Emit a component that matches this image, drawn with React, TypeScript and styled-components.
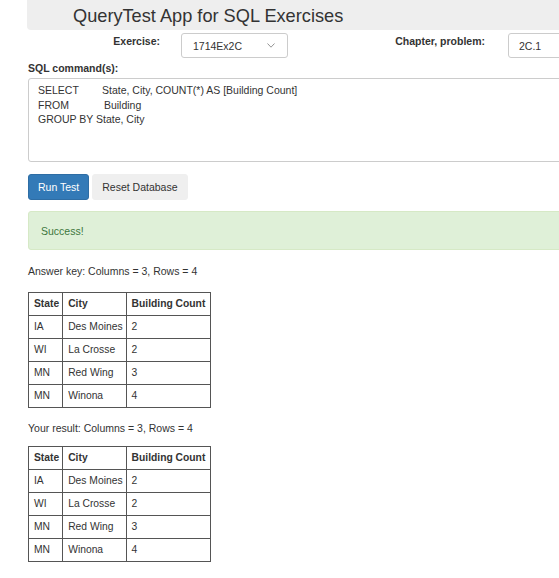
import React from "react";
import styled, { createGlobalStyle } from "styled-components";

const GlobalStyle = createGlobalStyle`
  html, body { margin: 0; padding: 0; background: #fff; overflow: hidden; }
  body {
    font-family: "Liberation Sans", Arial, sans-serif;
    font-size: 10.5px;
    color: #333;
  }
`;

const Page = styled.div`
  width: 700px;
  padding-left: 28px;
  box-sizing: border-box;
`;

const Header = styled.div`
  margin-left: -1px;
  height: 30px;
  background: #eeeeee;
  border-radius: 0 0 4px 4px;
  padding: 5px 0 0 46px;
  box-sizing: border-box;
`;

const Title = styled.h1`
  margin: 0;
  font-weight: normal;
  font-size: 18.2px;
  line-height: 22px;
  color: #333;
`;

const FormRow = styled.div`
  display: flex;
  align-items: flex-start;
  margin-top: 3px;
  height: 26px;
`;

const Label = styled.label<{ $width: number; $gap: number }>`
  width: ${(p) => p.$width}px;
  margin-right: ${(p) => p.$gap}px;
  text-align: right;
  font-weight: bold;
  line-height: 14px;
  padding-top: 1px;
`;

const SelectBox = styled.div`
  width: 107px;
  height: 25px;
  box-sizing: border-box;
  border: 1px solid #ccc;
  border-radius: 3px;
  display: flex;
  align-items: center;
  justify-content: space-between;
  padding: 1px 12px 0 11px;
`;

const Chevron = styled.svg`
  width: 8px;
  height: 5px;
  margin-top: -1px;
`;

const InputBox = styled.div`
  width: 120px;
  height: 25px;
  box-sizing: border-box;
  border: 1px solid #ccc;
  border-radius: 3px;
  display: flex;
  align-items: center;
  padding: 1px 0 0 10px;
`;

const SqlLabel = styled.div`
  font-weight: bold;
  line-height: 14px;
  margin-top: 2px;
`;

const SqlArea = styled.textarea`
  display: block;
  width: 100%;
  height: 84px;
  margin-top: 3px;
  box-sizing: border-box;
  border: 1px solid #ccc;
  border-radius: 3px;
  padding: 4px 9px;
  font-family: "Liberation Sans", Arial, sans-serif;
  font-size: 10.5px;
  line-height: 14.6px;
  color: #333;
  white-space: pre;
  resize: none;
  outline: none;
  overflow: hidden;
`;

const ButtonRow = styled.div`
  display: flex;
  gap: 3px;
  margin-top: 12px;
`;

const Button = styled.button<{ $primary?: boolean }>`
  height: 26px;
  padding: 0 9px;
  border-radius: 3px;
  font-family: "Liberation Sans", Arial, sans-serif;
  font-size: 10.5px;
  background: ${(p) => (p.$primary ? "#337ab7" : "#efefef")};
  color: ${(p) => (p.$primary ? "#fff" : "#333")};
  border: 1px solid ${(p) => (p.$primary ? "#2e6da4" : "#efefef")};
`;

const Alert = styled.div`
  margin-top: 11px;
  height: 39px;
  box-sizing: border-box;
  background: #dff0d8;
  border: 1px solid #d6e9c6;
  border-radius: 3px;
  color: #3c763d;
  display: flex;
  align-items: center;
  padding-left: 12px;
`;

const Caption = styled.p<{ $top: number }>`
  margin: ${(p) => p.$top}px 0 0;
  line-height: 14px;
`;

const Table = styled.table<{ $top: number }>`
  border-collapse: collapse;
  margin-top: ${(p) => p.$top}px;
  font-size: 10.3px;
  color: #333;
`;

const Th = styled.th`
  border: 1px solid #555;
  padding: 4px 3px 4px 5px;
  height: 23px;
  box-sizing: border-box;
  text-align: left;
  font-weight: bold;
  line-height: 14px;
  &:last-child { padding-right: 5px; }
`;

const Td = styled.td`
  border: 1px solid #555;
  padding: 4px 3px 4px 5px;
  height: 23px;
  box-sizing: border-box;
  line-height: 14px;
`;

const rows = [
  ["IA", "Des Moines", "2"],
  ["WI", "La Crosse", "2"],
  ["MN", "Red Wing", "3"],
  ["MN", "Winona", "4"],
];

const ResultTable = ({ top }: { top: number }) => (
  <Table $top={top}>
    <thead>
      <tr>
        <Th>State</Th>
        <Th>City</Th>
        <Th>Building Count</Th>
      </tr>
    </thead>
    <tbody>
      {rows.map((r, i) => (
        <tr key={i}>
          {r.map((c, j) => (
            <Td key={j}>{c}</Td>
          ))}
        </tr>
      ))}
    </tbody>
  </Table>
);

const sql =
  "SELECT        State, City, COUNT(*) AS [Building Count]\nFROM            Building\nGROUP BY State, City";

export default function App() {
  return (
    <>
      <GlobalStyle />
      <Page>
        <Header>
          <Title>QueryTest App for SQL Exercises</Title>
        </Header>
        <FormRow>
          <Label $width={132} $gap={21}>Exercise:</Label>
          <SelectBox>
            <span>1714Ex2C</span>
            <Chevron viewBox="0 0 8 5">
              <path d="M0.5 0.5 L4 4.2 L7.5 0.5" fill="none" stroke="#888" strokeWidth="0.9" />
            </Chevron>
          </SelectBox>
          <Label $width={197} $gap={23}>Chapter, problem:</Label>
          <InputBox>2C.1</InputBox>
        </FormRow>
        <SqlLabel>SQL command(s):</SqlLabel>
        <SqlArea readOnly value={sql} />
        <ButtonRow>
          <Button $primary>Run Test</Button>
          <Button>Reset Database</Button>
        </ButtonRow>
        <Alert>Success!</Alert>
        <Caption $top={14}>Answer key: Columns = 3, Rows = 4</Caption>
        <ResultTable top={14} />
        <Caption $top={13}>Your result: Columns = 3, Rows = 4</Caption>
        <ResultTable top={11} />
      </Page>
    </>
  );
}
